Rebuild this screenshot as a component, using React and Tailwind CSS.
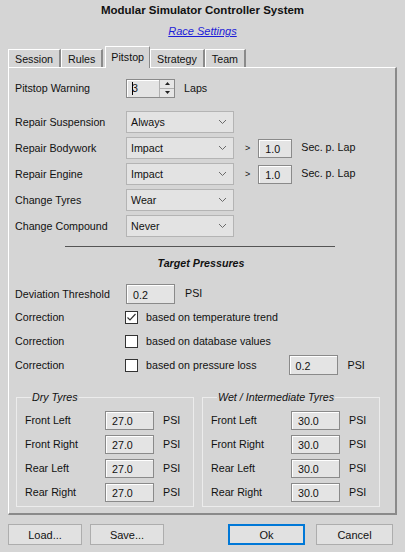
import { useState } from "react";

const font = { fontFamily: '"Liberation Sans", Arial, sans-serif' };

function Chevron() {
  return (
    <svg width="9" height="6" viewBox="0 0 9 6" className="shrink-0">
      <polyline points="1,1 4.5,4.5 8,1" fill="none" stroke="#6a6a6a" strokeWidth="1" />
    </svg>
  );
}

function Select({ value }) {
  return (
    <div className="w-[108px] h-[22px] flex items-center justify-between pl-[4px] pr-[6px] bg-[#e3e3e3] border border-[#b4b4b4]">
      <span>{value}</span>
      <Chevron />
    </div>
  );
}

function Field({ value, w = "w-[49px]", h = "h-[20px]" }) {
  return (
    <div className={`${w} ${h} flex items-end pb-[1px] pl-[6px] bg-[#e4e4e4] border border-[#8a8a8a] shadow-[inset_1px_1px_0_#ffffff]`}>
      <span>{value}</span>
    </div>
  );
}

function Checkbox({ checked }) {
  return (
    <div className="w-[13px] h-[13px] bg-white border border-[#333] flex items-center justify-center">
      {checked && (
        <svg width="11" height="11" viewBox="0 0 11 11">
          <polyline points="1.5,5.5 4,8 9.5,2" fill="none" stroke="#333" strokeWidth="1.2" />
        </svg>
      )}
    </div>
  );
}

function Tab({ label, active }) {
  if (active) {
    return (
      <div className="h-[22px] -mb-px ml-[2px] px-[5px] pt-[3px] border-t border-l border-white border-r border-r-[#8a8a8a] bg-[#d5d5d5] relative z-10">
        {label}
      </div>
    );
  }
  return (
    <div className="h-[18px] px-[6px] pt-[2px] border-t border-l border-white border-r-2 border-r-[#8a8a8a] bg-[#d5d5d5]">
      {label}
    </div>
  );
}

function TyreGroup({ title, value }) {
  const rows = ["Front Left", "Front Right", "Rear Left", "Rear Right"];
  return (
    <fieldset className="w-[178px] border border-[#ececec] pl-[8px] pt-[6px] pb-[4px] flex flex-col gap-[4px]">
      <legend className="italic px-[1px] leading-[14px] ml-[6px]">{title}</legend>
      {rows.map((r) => (
        <div key={r} className="flex items-center h-[20px]">
          <span className="w-[80px]">{r}</span>
          <Field value={value} h="h-[19px]" />
          <span className="ml-[9px]">PSI</span>
        </div>
      ))}
    </fieldset>
  );
}

export default function App() {
  const [tab] = useState("Pitstop");
  const tabs = ["Session", "Rules", "Pitstop", "Strategy", "Team"];

  const selects = [
    ["Repair Suspension", "Always"],
    ["Repair Bodywork", "Impact", "1.0"],
    ["Repair Engine", "Impact", "1.0"],
    ["Change Tyres", "Wear"],
    ["Change Compound", "Never"],
  ];

  return (
    <div style={font} className="w-[405px] h-[552px] bg-[#d5d5d5] text-[#111] text-[10.7px] leading-[14px] flex flex-col overflow-hidden">
      <div className="mt-[3px] text-center font-bold text-[11.5px]">
        Modular Simulator Controller System
      </div>
      <div className="mt-[7px] text-center italic underline decoration-1 text-[11px] text-[#1c1cd8]">
        Race Settings
      </div>

      {/* Tabs */}
      <div className="mt-[8px] px-[8px] flex items-end h-[21px]">
        {tabs.map((t) => (
          <Tab key={t} label={t} active={t === tab} />
        ))}
      </div>

      {/* Panel */}
      <div className="mx-[8px] h-[448px] border-t border-l border-white border-r-2 border-b-2 border-r-[#8a8a8a] border-b-[#8a8a8a] pl-[6px] pt-[10px] flex flex-col">
        <div className="flex items-center h-[20px]">
          <span className="w-[111px]">Pitstop Warning</span>
          <div className="w-[49px] h-[19px] flex bg-[#e4e4e4] border border-[#8a8a8a] shadow-[inset_1px_1px_0_#ffffff]">
            <div className="flex-1 flex items-center pl-[5px]">
              <span className="w-px h-[13px] bg-black" />
              <span className="-ml-[1px]">3</span>
            </div>
            <div className="w-[15px] flex flex-col border-l border-[#b0b0b0] bg-[#e6e6e6]">
              <div className="flex-1 flex items-center justify-center border-b border-[#b0b0b0]">
                <svg width="5" height="3" viewBox="0 0 5 3"><polygon points="2.5,0 5,3 0,3" fill="#222" /></svg>
              </div>
              <div className="flex-1 flex items-center justify-center">
                <svg width="5" height="3" viewBox="0 0 5 3"><polygon points="0,0 5,0 2.5,3" fill="#222" /></svg>
              </div>
            </div>
          </div>
          <span className="ml-[9px]">Laps</span>
        </div>

        <div className="mt-[13px] flex flex-col gap-[4px]">
          {selects.map(([label, value, secs]) => (
            <div key={label} className="flex items-center h-[22px]">
              <span className="w-[111px]">{label}</span>
              <Select value={value} />
              {secs && (
                <>
                  <span className="ml-[11px] text-[9px]">&gt;</span>
                  <div className="ml-[8px]">
                    <Field value={secs} w="w-[34px]" h="h-[19px]" />
                  </div>
                  <span className="ml-[9px] -mt-[3px]">Sec. p. Lap</span>
                </>
              )}
            </div>
          ))}
        </div>

        <div className="mt-[9px] ml-[50px] w-[270px] h-px bg-[#555]" />

        <div className="mt-[9px] text-center font-bold italic pr-[8px]">Target Pressures</div>

        <div className="mt-[14px] flex items-center h-[20px]">
          <span className="w-[111px]">Deviation Threshold</span>
          <Field value="0.2" />
          <span className="ml-[10px] -mt-[2px]">PSI</span>
        </div>

        <div className="mt-[3px] flex flex-col gap-[4px]">
          {[
            ["based on temperature trend", true],
            ["based on database values", false],
            ["based on pressure loss", false],
          ].map(([text, checked], i) => (
            <div key={text} className="flex items-center h-[20px]">
              <span className="w-[110px]">Correction</span>
              <Checkbox checked={checked} />
              <span className="ml-[8px]">{text}</span>
              {i === 2 && (
                <>
                  <div className="ml-[32px]">
                    <Field value="0.2" />
                  </div>
                  <span className="ml-[10px]">PSI</span>
                </>
              )}
            </div>
          ))}
        </div>

        <div className="mt-[15px] ml-[1px] flex gap-[8px]">
          <TyreGroup title="Dry Tyres" value="27.0" />
          <TyreGroup title="Wet / Intermediate Tyres" value="30.0" />
        </div>
      </div>

      {/* Buttons */}
      <div className="mt-[9px] px-[8px] flex text-[11px]">
        <button className="w-[74px] h-[21px] bg-[#e1e1e1] border border-[#adadad]">Load...</button>
        <button className="ml-[8px] w-[74px] h-[21px] bg-[#e1e1e1] border border-[#adadad]">Save...</button>
        <button className="ml-[64px] w-[77px] h-[21px] bg-[#e1e1e1] border-2 border-[#0078d7]">Ok</button>
        <button className="ml-[11px] w-[77px] h-[21px] bg-[#e1e1e1] border border-[#adadad]">Cancel</button>
      </div>
    </div>
  );
}
